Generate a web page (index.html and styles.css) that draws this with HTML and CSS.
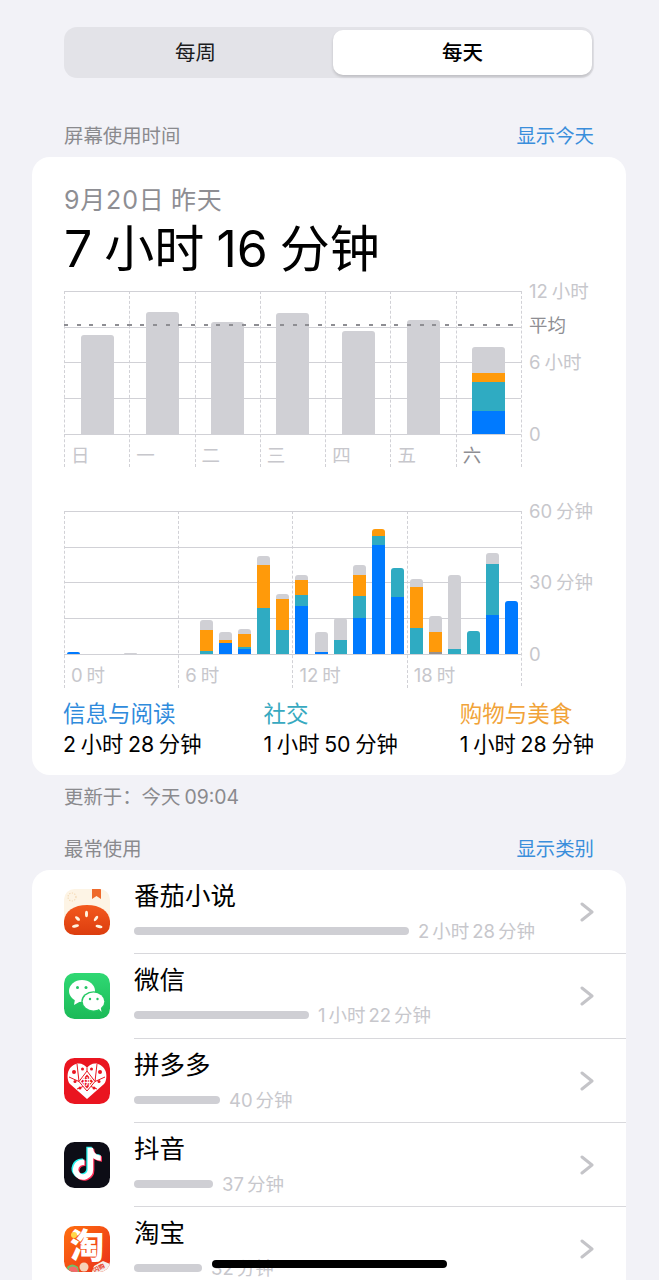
FILE: index.html
```html
<!DOCTYPE html>
<html lang="zh-CN">
<head>
<meta charset="utf-8">
<title>屏幕使用时间</title>
<link rel="stylesheet" href="styles.css">
</head>
<body>
<main class="screen">
  <div class="segmented">
    <div class="seg-item">每周</div>
    <div class="seg-item seg-active">每天</div>
  </div>

  <div class="section-head head-usage">
    <span>屏幕使用时间</span>
    <a class="link">显示今天</a>
  </div>

  <section class="card summary">
    <div class="date">9月20日 昨天</div>
    <div class="total">7 小时 16 分钟</div>

    <div class="chart week-chart">
      <div class="days">
        <div class="day"><div class="day-plot"><div class="bar wide" style="height:99px"><i class="gray" style="height:100%"></i></div></div><span class="tick">日</span></div>
        <div class="day"><div class="day-plot"><div class="bar wide" style="height:122px"><i class="gray" style="height:100%"></i></div></div><span class="tick">一</span></div>
        <div class="day"><div class="day-plot"><div class="bar wide" style="height:112px"><i class="gray" style="height:100%"></i></div></div><span class="tick">二</span></div>
        <div class="day"><div class="day-plot"><div class="bar wide" style="height:121px"><i class="gray" style="height:100%"></i></div></div><span class="tick">三</span></div>
        <div class="day"><div class="day-plot"><div class="bar wide" style="height:103px"><i class="gray" style="height:100%"></i></div></div><span class="tick">四</span></div>
        <div class="day"><div class="day-plot"><div class="bar wide" style="height:114px"><i class="gray" style="height:100%"></i></div></div><span class="tick">五</span></div>
        <div class="day"><div class="day-plot"><div class="bar wide" style="height:87px"><i class="gray" style="height:26px"></i><i class="orange" style="height:9px"></i><i class="teal" style="height:29px"></i><i class="blue" style="height:23px"></i></div></div><span class="tick tick-now">六</span></div>
        <div class="avg-line"></div>
      </div>
      <div class="axis">
        <span class="axis-label" style="top:0">12 小时</span>
        <span class="axis-label axis-avg" style="top:34px">平均</span>
        <span class="axis-label" style="top:71px">6 小时</span>
        <span class="axis-label" style="top:143px">0</span>
      </div>
    </div>

    <div class="chart hour-chart">
      <div class="hours">
        <div class="hour major"><div class="hour-plot"><div class="bar" style="height:2px"><i class="blue" style="height:100%"></i></div></div><span class="tick">0 时</span></div>
        <div class="hour"></div><div class="hour"></div>
        <div class="hour"><div class="hour-plot"><div class="bar" style="height:1px"><i class="gray" style="height:100%"></i></div></div></div>
        <div class="hour"></div><div class="hour"></div>
        <div class="hour major"><div class="hour-plot"></div><span class="tick">6 时</span></div>
        <div class="hour"><div class="hour-plot"><div class="bar"><i class="gray" style="height:9.4px"></i><i class="orange" style="height:21px"></i><i class="teal" style="height:3.3px"></i></div></div></div>
        <div class="hour"><div class="hour-plot"><div class="bar"><i class="gray" style="height:7.7px"></i><i class="orange" style="height:3px"></i><i class="blue" style="height:11.3px"></i></div></div></div>
        <div class="hour"><div class="hour-plot"><div class="bar"><i class="gray" style="height:5px"></i><i class="orange" style="height:13px"></i><i class="teal" style="height:2.3px"></i><i class="blue" style="height:4.7px"></i></div></div></div>
        <div class="hour"><div class="hour-plot"><div class="bar"><i class="gray" style="height:9px"></i><i class="orange" style="height:43.3px"></i><i class="teal" style="height:45.7px"></i></div></div></div>
        <div class="hour"><div class="hour-plot"><div class="bar"><i class="gray" style="height:5px"></i><i class="orange" style="height:30.7px"></i><i class="teal" style="height:24.3px"></i></div></div></div>
        <div class="hour major"><div class="hour-plot"><div class="bar"><i class="gray" style="height:5px"></i><i class="orange" style="height:14.7px"></i><i class="teal" style="height:11.6px"></i><i class="blue" style="height:47.7px"></i></div></div><span class="tick">12 时</span></div>
        <div class="hour"><div class="hour-plot"><div class="bar"><i class="gray" style="height:19.7px"></i><i class="blue" style="height:2.3px"></i></div></div></div>
        <div class="hour"><div class="hour-plot"><div class="bar"><i class="gray" style="height:21.4px"></i><i class="teal" style="height:14.3px"></i></div></div></div>
        <div class="hour"><div class="hour-plot"><div class="bar"><i class="gray" style="height:10px"></i><i class="orange" style="height:20.7px"></i><i class="teal" style="height:21.7px"></i><i class="blue" style="height:36.3px"></i></div></div></div>
        <div class="hour"><div class="hour-plot"><div class="bar"><i class="orange" style="height:7.6px"></i><i class="teal" style="height:8.7px"></i><i class="blue" style="height:109px"></i></div></div></div>
        <div class="hour"><div class="hour-plot"><div class="bar"><i class="teal" style="height:29.3px"></i><i class="blue" style="height:57px"></i></div></div></div>
        <div class="hour major"><div class="hour-plot"><div class="bar"><i class="gray" style="height:8.3px"></i><i class="orange" style="height:40.7px"></i><i class="teal" style="height:26px"></i></div></div><span class="tick">18 时</span></div>
        <div class="hour"><div class="hour-plot"><div class="bar"><i class="gray" style="height:15.7px"></i><i class="orange" style="height:19.7px"></i><i class="dim" style="height:2.3px"></i></div></div></div>
        <div class="hour"><div class="hour-plot"><div class="bar"><i class="gray" style="height:73.7px"></i><i class="teal" style="height:5.3px"></i></div></div></div>
        <div class="hour"><div class="hour-plot"><div class="bar"><i class="teal" style="height:23px"></i></div></div></div>
        <div class="hour"><div class="hour-plot"><div class="bar"><i class="gray" style="height:10.7px"></i><i class="teal" style="height:51px"></i><i class="blue" style="height:39px"></i></div></div></div>
        <div class="hour"><div class="hour-plot"><div class="bar"><i class="blue" style="height:53px"></i></div></div></div>
      </div>
      <div class="axis">
        <span class="axis-label" style="top:0">60 分钟</span>
        <span class="axis-label" style="top:71px">30 分钟</span>
        <span class="axis-label" style="top:143px">0</span>
      </div>
    </div>

    <div class="legend">
      <div class="legend-item"><div class="legend-name text-blue">信息与阅读</div><div class="legend-value">2 小时 28 分钟</div></div>
      <div class="legend-item"><div class="legend-name text-teal">社交</div><div class="legend-value">1 小时 50 分钟</div></div>
      <div class="legend-item"><div class="legend-name text-orange">购物与美食</div><div class="legend-value">1 小时 28 分钟</div></div>
    </div>
  </section>

  <div class="updated">更新于：今天 09:04</div>

  <div class="section-head head-apps">
    <span>最常使用</span>
    <a class="link">显示类别</a>
  </div>

  <section class="card apps">
    <div class="app">
      <svg class="app-icon" viewBox="0 0 46 46">
        <defs>
          <linearGradient id="tomato" x1="0" y1="0" x2="0" y2="1"><stop offset="0" stop-color="#f3591d"/><stop offset="1" stop-color="#dc3d0e"/></linearGradient>
          <clipPath id="round"><rect width="46" height="46" rx="10.5"/></clipPath>
        </defs>
        <g clip-path="url(#round)">
          <rect width="46" height="46" fill="#fdf4e5"/>
          <circle cx="8" cy="8" r="4" fill="none" stroke="#f3d9b5" stroke-width="1.2" stroke-dasharray="1.2 1.4"/>
          <path d="M28 0h9v10l-4.500-3L28 10z" fill="#ee6a2c"/>
          <path d="M0 32C1 22 10 16 23 16S45 22 46 32V46H0z" fill="url(#tomato)"/>
          <g fill="#fff3df">
            <ellipse cx="22.500" cy="25" rx="1.500" ry="3.300"/>
            <ellipse cx="13.500" cy="29.500" rx="1.500" ry="3" transform="rotate(-50 13.500 29.500)"/>
            <ellipse cx="32" cy="29.500" rx="1.500" ry="3" transform="rotate(35 32 29.500)"/>
            <ellipse cx="11.500" cy="37" rx="3.500" ry="1.500" transform="rotate(-12 11.500 37)"/>
            <ellipse cx="35" cy="37.500" rx="3.500" ry="1.500" transform="rotate(12 35 37.500)"/>
          </g>
        </g>
      </svg>
      <div class="app-main">
        <div class="app-name">番茄小说</div>
        <div class="app-usage"><span class="usage-bar" style="width:275px"></span><span class="usage-time">2 小时 28 分钟</span></div>
      </div>
      <svg class="chevron" viewBox="0 0 14 20"><path d="M2 2l10 8-10 8"/></svg>
    </div>

    <div class="app">
      <svg class="app-icon" viewBox="0 0 46 46">
        <defs>
          <linearGradient id="wechat" x1="0" y1="0" x2="0" y2="1"><stop offset="0" stop-color="#2fd873"/><stop offset="1" stop-color="#1cba58"/></linearGradient>
        </defs>
        <rect width="46" height="46" rx="10.500" fill="url(#wechat)"/>
        <ellipse cx="18" cy="18" rx="13" ry="11" fill="#fff"/>
        <path d="M11 26l-1 6 7-4z" fill="#fff"/>
        <ellipse cx="29.500" cy="28.500" rx="12.200" ry="10.200" fill="#24c863"/>
        <ellipse cx="29.500" cy="28.500" rx="10.800" ry="9" fill="#fff"/>
        <path d="M34 35l3.500 4-1-6z" fill="#fff"/>
        <g fill="#26c566"><circle cx="13.500" cy="14.500" r="1.500"/><circle cx="22" cy="14.500" r="1.500"/><circle cx="26" cy="26" r="1.200"/><circle cx="33.500" cy="26" r="1.200"/></g>
      </svg>
      <div class="app-main">
        <div class="app-name">微信</div>
        <div class="app-usage"><span class="usage-bar" style="width:175px"></span><span class="usage-time">1 小时 22 分钟</span></div>
      </div>
      <svg class="chevron" viewBox="0 0 14 20"><path d="M2 2l10 8-10 8"/></svg>
    </div>

    <div class="app">
      <svg class="app-icon" viewBox="0 0 46 46">
        <rect width="46" height="46" rx="10.500" fill="#ea1520"/>
        <path d="M23 41L6 26C3 23 3 15 5 12 7 8 11 5.500 15 5.500c3 0 6 1.500 8 4.500 2-3 5-4.500 8-4.500 4 0 8 2.500 10 6.500 2 3 2 11-1 14z" fill="#fff"/>
        <g fill="none" stroke="#ea1520" stroke-width="1">
          <path d="M15 23.500L23 13l8 10.500L23 33zM15 23.500L5 19M31 23.500L41 19M23 13V10M15 23.500L13 6M31 23.500L33 6M19 28.500L13 31M27 28.500L33 31"/>
        </g>
        <g fill="#ea1520">
          <circle cx="10" cy="14" r="2"/><circle cx="36" cy="14" r="2"/>
          <circle cx="18.500" cy="11" r="1.500"/><circle cx="27.500" cy="11" r="1.500"/>
          <circle cx="11" cy="23.500" r="1.500"/><circle cx="35" cy="23.500" r="1.500"/>
          <circle cx="16" cy="30" r="1.500"/><circle cx="30" cy="30" r="1.500"/>
          <path d="M23 16.500l6 7-6 7-6-7z"/>
        </g>
        <text class="pdd-mark" x="23" y="27" text-anchor="middle">拼</text>
      </svg>
      <div class="app-main">
        <div class="app-name">拼多多</div>
        <div class="app-usage"><span class="usage-bar" style="width:86px"></span><span class="usage-time">40 分钟</span></div>
      </div>
      <svg class="chevron" viewBox="0 0 14 20"><path d="M2 2l10 8-10 8"/></svg>
    </div>

    <div class="app">
      <svg class="app-icon" viewBox="0 0 46 46">
        <defs>
          <path id="note" d="M19.590 6.690a4.830 4.830 0 0 1-3.770-4.250V2h-3.450v13.670a2.890 2.890 0 0 1-5.200 1.740 2.890 2.890 0 0 1 2.310-4.640 2.930 2.930 0 0 1 .88.130V9.400a6.840 6.840 0 0 0-1-.05A6.330 6.330 0 0 0 5 20.100a6.340 6.340 0 0 0 10.860-4.430v-7a8.160 8.160 0 0 0 4.770 1.520v-3.400a4.850 4.850 0 0 1-1-.1z"/>
        </defs>
        <rect width="46" height="46" rx="10.500" fill="#0d0d16"/>
        <use href="#note" fill="#25f4ee" transform="translate(2.500 1.500) scale(1.600)"/>
        <use href="#note" fill="#fe2c55" transform="translate(5 3.500) scale(1.600)"/>
        <use href="#note" fill="#fff" transform="translate(3.800 2.500) scale(1.600)"/>
      </svg>
      <div class="app-main">
        <div class="app-name">抖音</div>
        <div class="app-usage"><span class="usage-bar" style="width:79px"></span><span class="usage-time">37 分钟</span></div>
      </div>
      <svg class="chevron" viewBox="0 0 14 20"><path d="M2 2l10 8-10 8"/></svg>
    </div>

    <div class="app">
      <svg class="app-icon" viewBox="0 0 46 46">
        <defs>
          <linearGradient id="taobao" x1="0" y1="0" x2="1" y2="1"><stop offset="0" stop-color="#ff6f0f"/><stop offset="1" stop-color="#e9301a"/></linearGradient>
          <clipPath id="round-tb"><rect width="46" height="46" rx="10.500"/></clipPath>
        </defs>
        <g clip-path="url(#round-tb)">
          <rect width="46" height="46" fill="url(#taobao)"/>
          <text class="tb-mark" x="23" y="32" text-anchor="middle">淘</text>
          <circle cx="10" cy="9" r="3" fill="#ffd84a"/>
          <path d="M3 41q5-5 11 0l1 5H4z" fill="#6fc269"/>
          <path d="M5 42q4-3 8 0l1 4H5z" fill="#f4696b"/>
          <circle cx="20" cy="41" r="4.500" fill="#f7d3b8"/>
          <path d="M28 46l2-6 9-5 7 3v8z" fill="#f5f1ec"/>
          <text class="tb-tag" x="36" y="44" text-anchor="middle" transform="rotate(-30 36 44)">闪购</text>
        </g>
      </svg>
      <div class="app-main">
        <div class="app-name">淘宝</div>
        <div class="app-usage"><span class="usage-bar" style="width:68px"></span><span class="usage-time">32 分钟</span></div>
      </div>
      <svg class="chevron" viewBox="0 0 14 20"><path d="M2 2l10 8-10 8"/></svg>
    </div>
  </section>

  <div class="home-indicator"></div>
</main>
</body>
</html>
```

FILE: styles.css
```css
* { box-sizing: border-box; }

html, body {
  margin: 0;
  height: 1280px;
  overflow: hidden;
  background: #f2f2f7;
}

.screen {
  position: relative;
  height: 1280px;
  overflow: hidden;
  padding-top: 27px;
  font-family: Inter, "Noto Sans CJK SC", sans-serif;
  word-spacing: -0.08em;
  color: #000;
}

/* Week / day switch */
.segmented {
  display: flex;
  align-items: center;
  width: 530px;
  height: 51px;
  margin-left: 64px;
  padding: 3px 2px 3px 0;
  background: #e3e3e8;
  border-radius: 13px;
}

.seg-item {
  flex: 1;
  padding-right: 6px;
  text-align: center;
  font-size: 20.500px;
  line-height: 45px;
  color: #1c1c1e;
}

.seg-active {
  flex: 0 0 259px;
  height: 45px;
  padding-right: 0;
  background: #fff;
  border-radius: 10px;
  color: #000;
  font-weight: 500;
  box-shadow: 0 2px 3px rgba(0, 0, 0, .16);
}

/* Section captions */
.section-head {
  display: flex;
  justify-content: space-between;
  margin: 0 65px 0 64px;
  font-size: 19.400px;
  line-height: 28px;
  color: #8a8a8e;
}

.head-usage { margin-top: 44px; }
.head-apps { margin-top: 24px; }

.link { color: #3a8edb; }

.card {
  margin: 0 33px 0 32px;
  background: #fff;
  border-radius: 18px;
}

.summary {
  height: 618px;
  margin-top: 7px;
  padding: 26px 33px 0 32px;
}

.date {
  font-size: 25px;
  line-height: 34px;
  color: #8e8e93;
  letter-spacing: .8px;
}

.total {
  margin-top: 2px;
  font-size: 50px;
  line-height: 60px;
  word-spacing: -0.04em;
  color: #000;
}

/* Charts */
.chart {
  position: relative;
  width: 458px;
}

.week-chart { margin-top: 12px; }
.hour-chart { margin-top: 44px; }

.days,
.hours {
  --rule: linear-gradient(#d1d1d6, #d1d1d6);
  position: relative;
  display: flex;
  height: 176px;
  border-right: 1px dashed #d1d1d6;
  background-image: var(--rule), var(--rule), var(--rule), var(--rule), var(--rule);
  background-size: 100% 1px;
  background-repeat: no-repeat;
  background-position: 0 0, 0 36px, 0 71px, 0 107px, 0 143px;
}

.hours {
  display: grid;
  grid-template-columns: repeat(24, 1fr);
  height: 175px;
}

.day {
  flex: 1;
  border-left: 1px dashed #d1d1d6;
  min-width: 0;
}

.day-plot,
.hour-plot {
  display: flex;
  align-items: flex-end;
  height: 143px;
}

.day-plot { justify-content: center; }

.hour { min-width: 0; }
.hour.major { border-left: 1px dashed #d1d1d6; }
.hour.major > .tick { margin: 8px 0 0 6px; }

.bar {
  display: flex;
  flex-direction: column;
  width: 13px;
  margin-left: 3px;
  border-radius: 3px 3px 0 0;
  overflow: hidden;
}

.hour.major .bar { margin-left: 2px; }

.bar.wide {
  width: 33px;
  margin-left: 0;
}

.bar i { display: block; }
.gray { background: #d0d0d5; }
.orange { background: #ff9a0a; }
.teal { background: #2fabc2; }
.blue { background: #007aff; }
.dim { background: #98908c; }

.tick {
  display: block;
  white-space: nowrap;
  margin: 8px 0 0 6px;
  font-size: 18.500px;
  line-height: 26px;
  color: #c7c7cc;
}

.tick-now { color: #8e8e93; }

/* Average marker across the week bars */
.avg-line {
  position: absolute;
  left: 0;
  right: 0;
  top: 33px;
  height: 2px;
  background: repeating-linear-gradient(90deg, #8e8e93 0 4px, transparent 4px 12.700px);
}

.axis-label {
  position: absolute;
  left: 465px;
  transform: translateY(-50%);
  white-space: nowrap;
  font-size: 18.500px;
  line-height: 26px;
  color: #c7c7cc;
}

.axis-avg { color: #8e8e93; }

/* Category totals */
.legend {
  display: flex;
  justify-content: space-between;
  margin: 12px 0 0 -1px;
  width: 531px;
}

.legend-name {
  font-size: 22.500px;
  line-height: 32px;
}

.legend-value {
  margin-top: -2px;
  font-size: 21.300px;
  line-height: 32px;
  color: #000;
}

.text-blue { color: #2f8bdc; }
.text-teal { color: #37a9c0; }
.text-orange { color: #f1a339; }

.updated {
  margin: 8px 0 0 64px;
  font-size: 19.400px;
  line-height: 28px;
  color: #8a8a8e;
}

/* Most used apps */
.apps {
  margin-top: 7px;
  height: 500px;
  padding-left: 32px;
}

.app {
  position: relative;
  display: flex;
  align-items: flex-start;
  height: 84.300px;
  padding-top: 19px;
}

/* Row separator starts at the text column and runs to the card edge */
.app::after {
  content: "";
  position: absolute;
  left: 70px;
  right: 0;
  bottom: 0;
  height: 1px;
  background: #d8d8dc;
}

.app-icon {
  flex: none;
  width: 46px;
  height: 46px;
}

.app-main {
  flex: 1;
  margin-left: 24px;
  margin-top: -11px;
}

.app-name {
  font-size: 25.500px;
  line-height: 36px;
}

.app-usage {
  display: flex;
  align-items: center;
  margin-top: 5px;
  height: 24px;
}

.usage-bar {
  height: 8px;
  border-radius: 4px;
  background: #cfcfd4;
}

.usage-time {
  margin-left: 9px;
  font-size: 18.500px;
  line-height: 24px;
  word-spacing: -0.12em;
  white-space: nowrap;
  color: #c7c7cc;
}

.chevron {
  flex: none;
  width: 14px;
  height: 20px;
  margin: 13px 32px 0 0;
}

.chevron path {
  fill: none;
  stroke: #c4c4c8;
  stroke-width: 3;
  stroke-linecap: round;
  stroke-linejoin: round;
}

.pdd-mark {
  font-size: 9px;
  font-weight: 700;
  fill: #fff;
}

.tb-mark {
  font-size: 34px;
  font-weight: 900;
  fill: #fff;
}

.tb-tag {
  font-size: 6px;
  font-weight: 700;
  fill: #e8321a;
}

.home-indicator {
  position: absolute;
  left: 212px;
  top: 1260px;
  width: 235px;
  height: 8px;
  border-radius: 4px;
  background: #000;
}
```
